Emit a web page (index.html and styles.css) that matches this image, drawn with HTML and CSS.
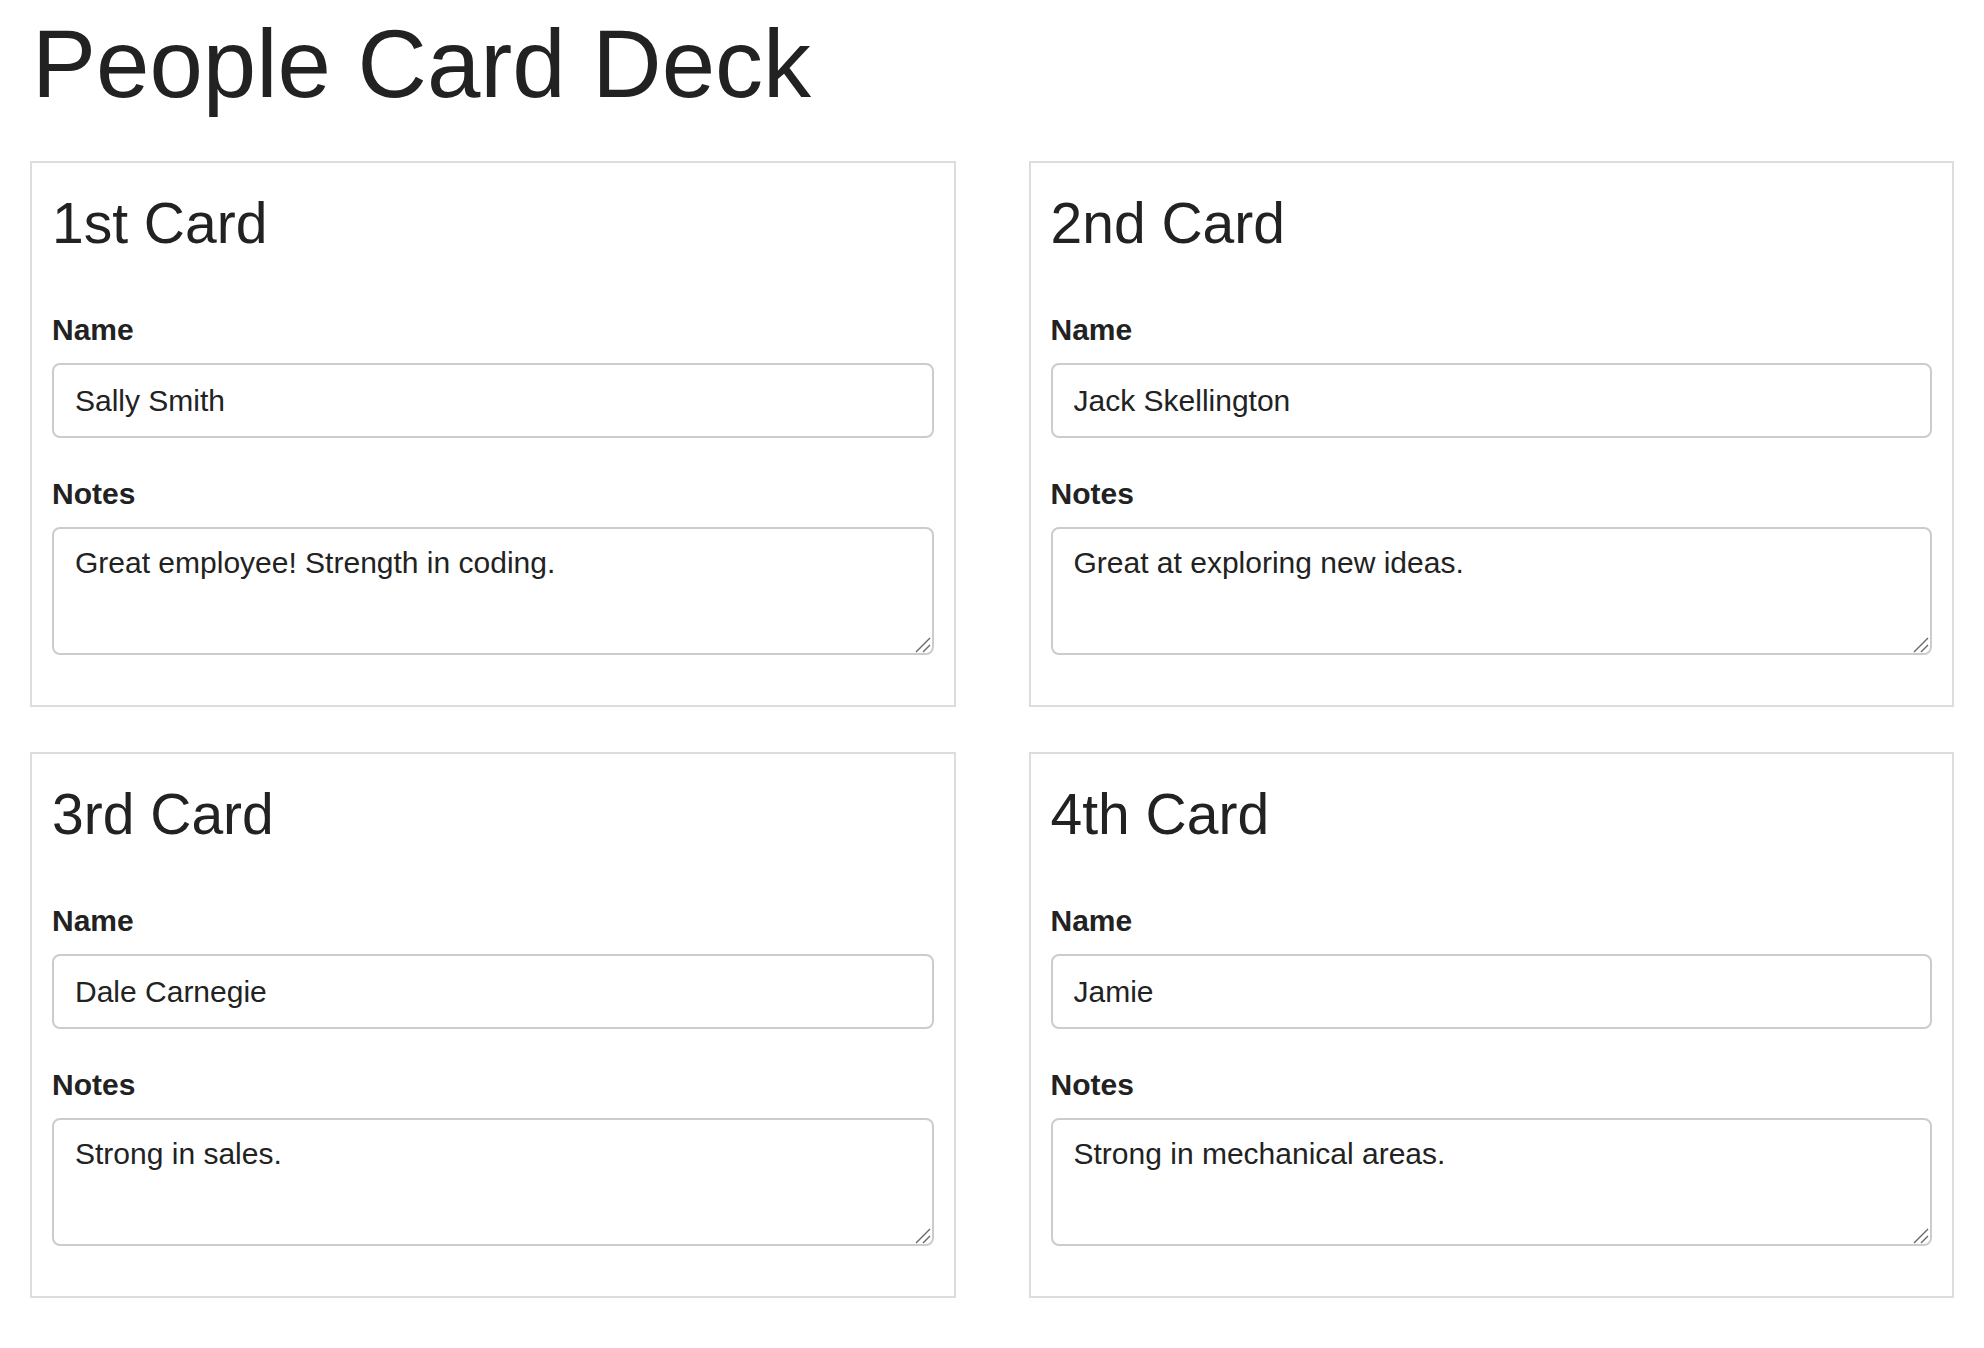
FILE: index.html
```html
<!DOCTYPE html>
<html lang="en">
<head>
<meta charset="utf-8">
<title>People Card Deck</title>
<link rel="stylesheet" href="styles.css">
</head>
<body>
<div class="page">
  <h1 class="title">People Card Deck</h1>
  <div class="deck">
    <section class="card">
      <h2 class="card-title">1st Card</h2>
      <div class="field">
        <label class="field-label">Name</label>
        <input class="field-input" type="text" value="Sally Smith">
      </div>
      <div class="field">
        <label class="field-label">Notes</label>
        <div class="area-wrap">
          <textarea class="field-area">Great employee! Strength in coding.</textarea>
          <svg class="grip" width="16" height="16" viewBox="0 0 16 16" aria-hidden="true"><path d="M1 15 L15 1 M8 15 L15 8" stroke="#666" stroke-width="1.4" fill="none"/></svg>
        </div>
      </div>
    </section>
    <section class="card">
      <h2 class="card-title">2nd Card</h2>
      <div class="field">
        <label class="field-label">Name</label>
        <input class="field-input" type="text" value="Jack Skellington">
      </div>
      <div class="field">
        <label class="field-label">Notes</label>
        <div class="area-wrap">
          <textarea class="field-area">Great at exploring new ideas.</textarea>
          <svg class="grip" width="16" height="16" viewBox="0 0 16 16" aria-hidden="true"><path d="M1 15 L15 1 M8 15 L15 8" stroke="#666" stroke-width="1.4" fill="none"/></svg>
        </div>
      </div>
    </section>
    <section class="card">
      <h2 class="card-title">3rd Card</h2>
      <div class="field">
        <label class="field-label">Name</label>
        <input class="field-input" type="text" value="Dale Carnegie">
      </div>
      <div class="field">
        <label class="field-label">Notes</label>
        <div class="area-wrap">
          <textarea class="field-area">Strong in sales.</textarea>
          <svg class="grip" width="16" height="16" viewBox="0 0 16 16" aria-hidden="true"><path d="M1 15 L15 1 M8 15 L15 8" stroke="#666" stroke-width="1.4" fill="none"/></svg>
        </div>
      </div>
    </section>
    <section class="card">
      <h2 class="card-title">4th Card</h2>
      <div class="field">
        <label class="field-label">Name</label>
        <input class="field-input" type="text" value="Jamie">
      </div>
      <div class="field">
        <label class="field-label">Notes</label>
        <div class="area-wrap">
          <textarea class="field-area">Strong in mechanical areas.</textarea>
          <svg class="grip" width="16" height="16" viewBox="0 0 16 16" aria-hidden="true"><path d="M1 15 L15 1 M8 15 L15 8" stroke="#666" stroke-width="1.4" fill="none"/></svg>
        </div>
      </div>
    </section>
  </div>
</div>
</body>
</html>
```

FILE: styles.css
```css
html, body {
  margin: 0;
  padding: 0;
  background: #ffffff;
}

body {
  font-family: "Liberation Sans", Arial, Helvetica, sans-serif;
  color: #222222;
}

.page {
  padding: 0 30px;
}

.title {
  margin: 11px 0 44px 2px;
  font-size: 96px;
  line-height: 106px;
  font-weight: 400;
  color: #222222;
}

.deck {
  display: grid;
  grid-template-columns: 1fr 1fr;
  column-gap: 73px;
  row-gap: 45px;
}

.card {
  border: 2px solid #dddddd;
  padding: 29px 20px 50px;
  box-sizing: border-box;
}

.card-title {
  margin: 0 0 55px;
  font-size: 57px;
  line-height: 63px;
  font-weight: 400;
  color: #222222;
}

.field {
  display: flex;
  flex-direction: column;
}

.field + .field {
  margin-top: 36px;
}

.field-label {
  font-size: 30px;
  line-height: 40px;
  font-weight: 700;
  margin-bottom: 13px;
  color: #222222;
}

.field-input,
.field-area {
  box-sizing: border-box;
  width: 100%;
  border: 2px solid #cccccc;
  border-radius: 8px;
  font-family: "Liberation Sans", Arial, Helvetica, sans-serif;
  font-size: 30px;
  color: #222222;
  background: #ffffff;
  margin: 0;
  outline: none;
}

.field-input {
  height: 75px;
  padding: 0 21px;
  line-height: 71px;
}

.area-wrap {
  position: relative;
}

.field-area {
  height: 128px;
  padding: 13px 21px;
  line-height: 42px;
  resize: none;
  display: block;
}

.grip {
  position: absolute;
  right: 3px;
  bottom: 2px;
  display: block;
}
```
